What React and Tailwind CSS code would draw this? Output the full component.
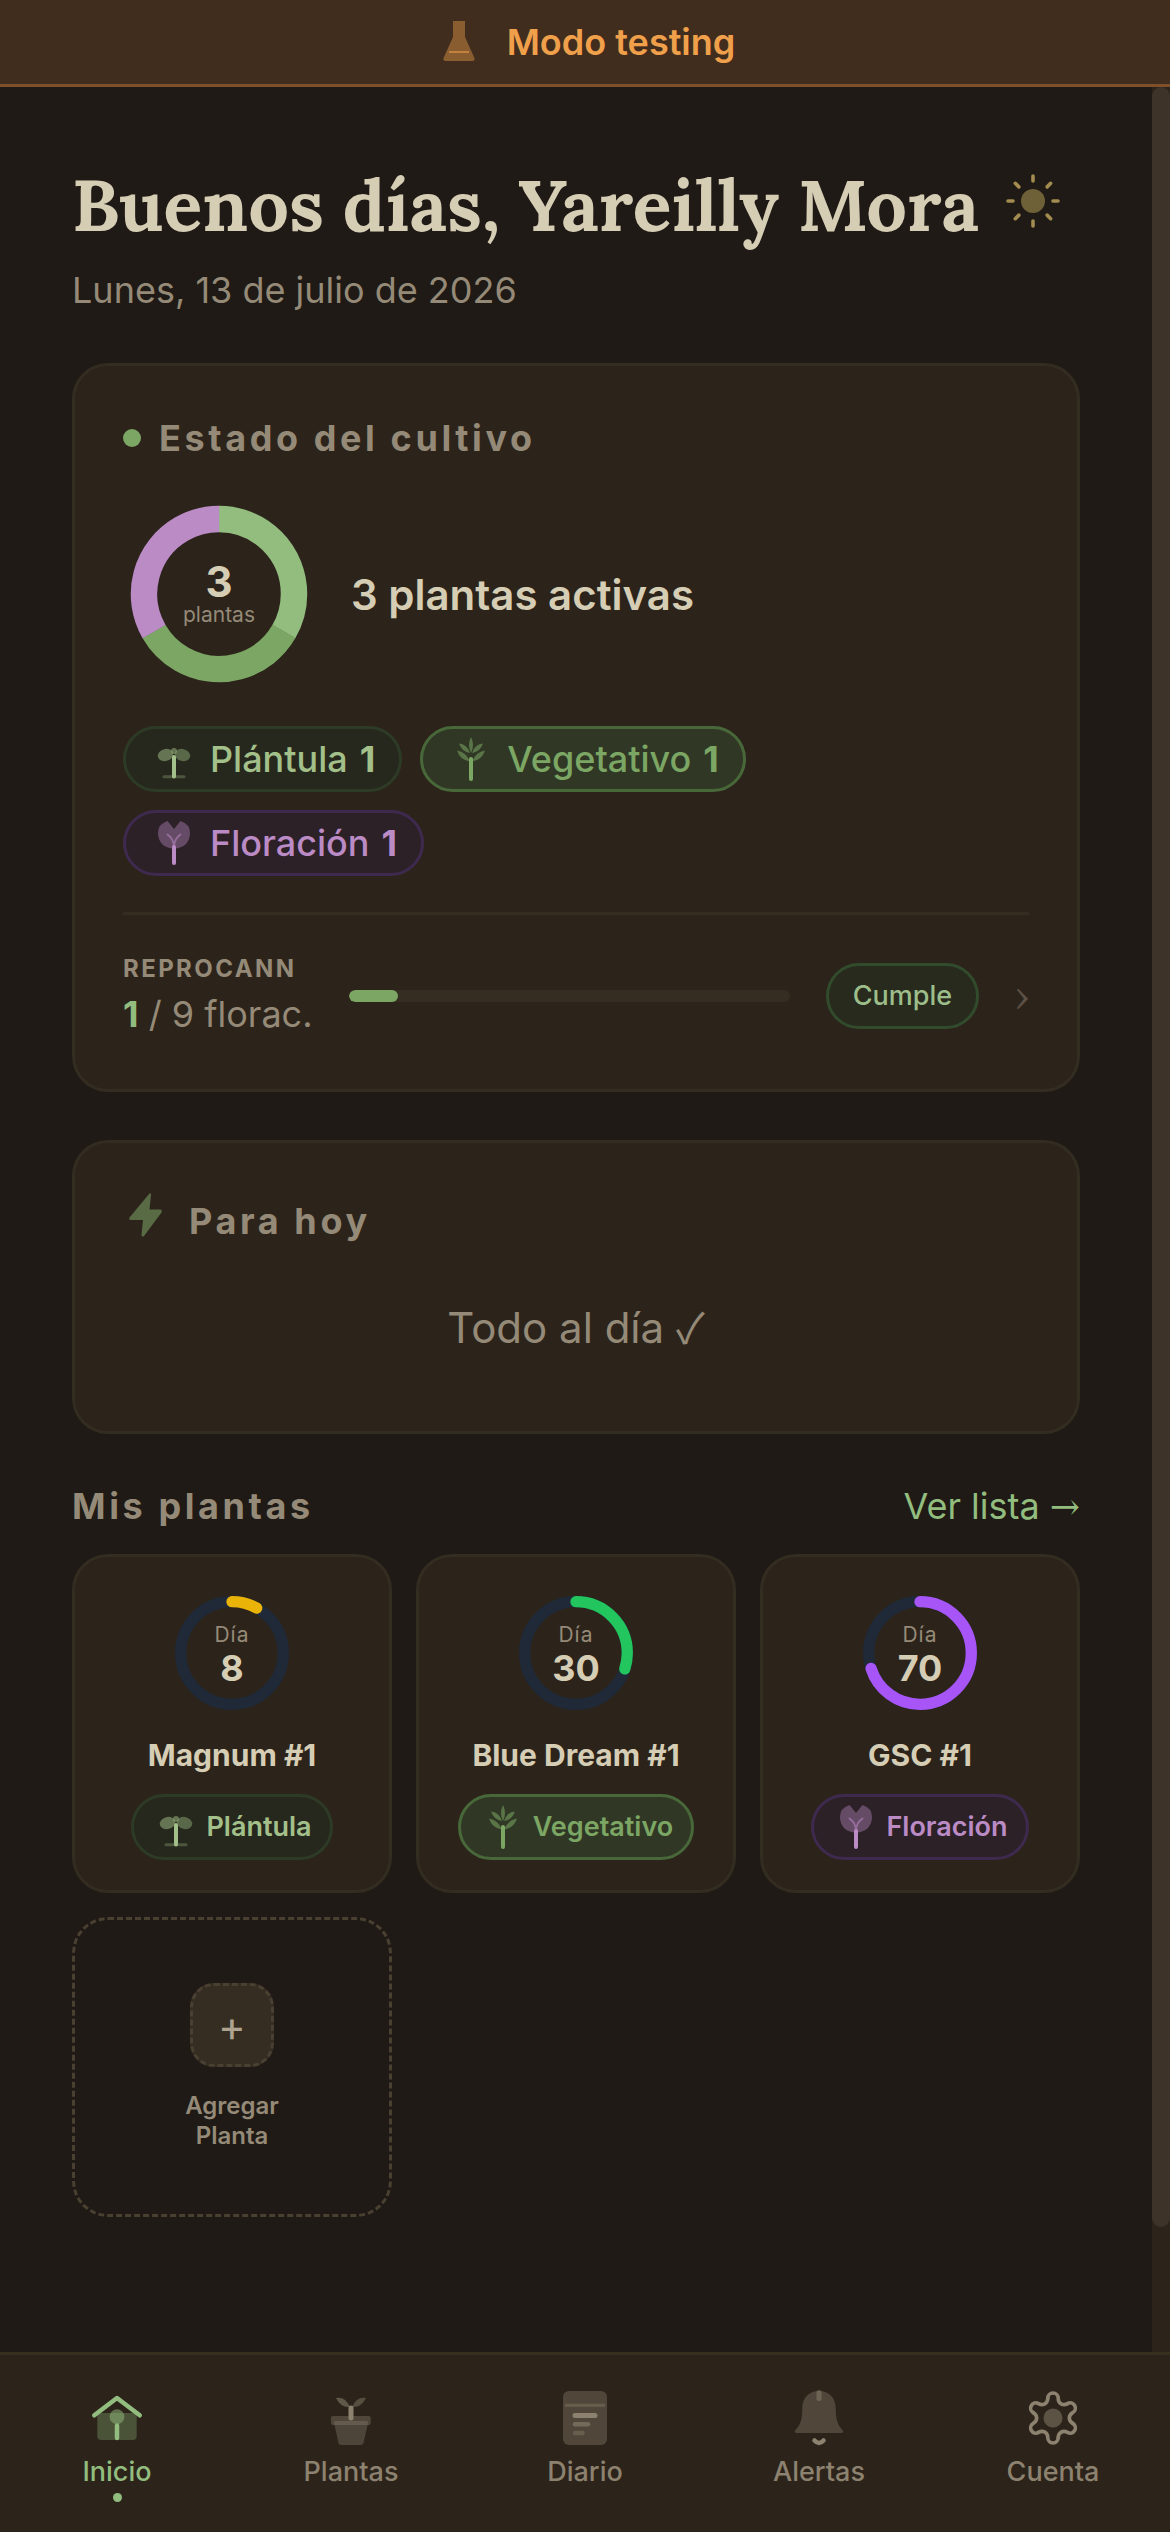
import React, { useState } from 'react';
import clsx from 'clsx';

const STAGES = {
  plantula: {
    label: 'Plántula',
    chip: 'bg-[#27281d] border-[#2d3b26] text-[#a3c08a]',
    icon: SeedlingIcon,
  },
  vegetativo: {
    label: 'Vegetativo',
    chip: 'bg-[#303825] border-[#48683a] text-[#7ca664]',
    icon: LeafIcon,
  },
  floracion: {
    label: 'Floración',
    chip: 'bg-[#2d2128] border-[#3f2a4f] text-[#bb8bc6]',
    icon: FlowerIcon,
  },
};

const STAGE_COUNTS = [
  { stage: 'plantula', count: 1 },
  { stage: 'vegetativo', count: 1 },
  { stage: 'floracion', count: 1 },
];

const PLANTS = [
  { name: 'Magnum #1', day: 8, color: '#eab308', stage: 'plantula' },
  { name: 'Blue Dream #1', day: 30, color: '#22c55e', stage: 'vegetativo' },
  { name: 'GSC #1', day: 70, color: '#a855f7', stage: 'floracion' },
];

const TABS = [
  { id: 'inicio', label: 'Inicio', icon: HomeIcon },
  { id: 'plantas', label: 'Plantas', icon: PotIcon },
  { id: 'diario', label: 'Diario', icon: JournalIcon },
  { id: 'alertas', label: 'Alertas', icon: BellIcon },
  { id: 'cuenta', label: 'Cuenta', icon: GearIcon },
];

/* Icons */

function FlaskIcon() {
  return (
    <svg viewBox="0 0 48 48" className="size-12" fill="none" aria-hidden="true">
      <path
        d="M18 4H30V20L39 40Q41 44 37 44H11Q7 44 9 40L18 20Z"
        transform="translate(0 -1)"
        fill="#f0a04b"
        fillOpacity="0.42"
      />
      <path d="M14 34H34" stroke="#f0a04b" strokeOpacity="0.55" strokeWidth="2" />
    </svg>
  );
}

function SunIcon() {
  return (
    <svg viewBox="0 0 60 60" className="size-15" fill="none" aria-hidden="true">
      <circle cx="30" cy="30" r="12" fill="#6f6137" />
      {[0, 45, 90, 135, 180, 225, 270, 315].map((angle) => (
        <path
          key={angle}
          d="M30 10V5"
          transform={`rotate(${angle} 30 30)`}
          stroke="#a38c4f"
          strokeWidth="3.6"
          strokeLinecap="round"
        />
      ))}
    </svg>
  );
}

function BoltIcon() {
  return (
    <svg viewBox="0 0 48 48" className="size-12" aria-hidden="true">
      <path
        d="M26.5 2.5L6.5 26.5Q5.5 29 8 29H20L18.5 44Q19 47 21 45L38.5 21.5Q39.5 18.5 37 18.5H26.5L28 4Q28 1.5 26.5 2.5Z"
        fill="#596b45"
      />
    </svg>
  );
}

function SeedlingIcon() {
  return (
    <svg viewBox="0 0 48 48" className="size-12 shrink-0" aria-hidden="true">
      <g fill="currentColor">
        <ellipse cx="15.5" cy="20" rx="7.8" ry="6" transform="rotate(-14 15.5 20)" opacity="0.5" />
        <ellipse cx="32.5" cy="20" rx="7.8" ry="6" transform="rotate(14 32.5 20)" opacity="0.42" />
        <circle cx="24" cy="16" r="3" opacity="0.5" />
      </g>
      <g stroke="currentColor" strokeLinecap="round">
        <path d="M14 41.7H34" strokeWidth="3" opacity="0.3" />
        <path d="M24 22V41.5" strokeWidth="4" />
      </g>
    </svg>
  );
}

function LeafIcon() {
  return (
    <svg viewBox="0 0 48 48" className="size-12 shrink-0" aria-hidden="true">
      <g fill="currentColor" opacity="0.55">
        <path d="M24 2Q28 10 24 18Q20 10 24 2Z" />
        <path d="M12 8.5Q20 9 23 18Q15 17 12 8.5Z" />
        <path d="M36 8.5Q28 9 25 18Q33 17 36 8.5Z" />
        <path d="M10 15.5Q19 17 23 26.5Q13 25 10 15.5Z" />
        <path d="M38 15.5Q29 17 25 26.5Q35 25 38 15.5Z" />
      </g>
      <path d="M24 24V44" stroke="currentColor" strokeWidth="4" strokeLinecap="round" />
    </svg>
  );
}

function FlowerIcon() {
  return (
    <svg viewBox="0 0 48 48" className="size-12 shrink-0" fill="none" aria-hidden="true">
      <path
        d="M24 10L17.5 2Q8 5 8 14C8 23 14 29.5 24 29.5S40 23 40 14Q40 5 30.5 2Z"
        fill="currentColor"
        opacity="0.4"
      />
      <g stroke="currentColor" strokeLinecap="round">
        <path d="M17.5 15.5Q23 19 24 27Q25 19 30.5 15.5" strokeWidth="2" opacity="0.55" />
        <path d="M24 28V44" strokeWidth="4" />
      </g>
    </svg>
  );
}

function HomeIcon() {
  return (
    <svg viewBox="0 0 60 60" className="size-15" fill="none" aria-hidden="true">
      <rect x="10.3" y="25" width="39.4" height="27" rx="4" fill="currentColor" opacity="0.3" />
      <circle cx="30" cy="28.7" r="7.4" fill="currentColor" opacity="0.5" />
      <g stroke="currentColor" strokeWidth="4.5" strokeLinecap="round" strokeLinejoin="round">
        <path d="M7.3 27.3L30 10L52.7 27.3" />
        <path d="M30 37.5V50" />
      </g>
    </svg>
  );
}

function PotIcon() {
  return (
    <svg viewBox="0 0 60 60" className="size-15" fill="none" aria-hidden="true">
      <path d="M13 35Q12.5 33 15 33H45Q47.5 33 47 35L42.5 55Q42 57 40 57H20Q18 57 17.5 55Z" fill="#4d443a" />
      <rect x="10" y="28" width="39.7" height="9" rx="2" fill="currentColor" opacity="0.38" />
      <path d="M29 19Q20 20 15 10Q24 8 29 19Z" fill="currentColor" opacity="0.55" />
      <path d="M31 19Q40 20 45 10Q36 8 31 19Z" fill="currentColor" opacity="0.45" />
      <path d="M30 20V30" stroke="currentColor" strokeWidth="5" strokeLinecap="round" />
    </svg>
  );
}

function JournalIcon() {
  return (
    <svg viewBox="0 0 60 60" className="size-15" fill="none" aria-hidden="true">
      <rect x="8" y="3" width="44" height="54" rx="6" fill="currentColor" opacity="0.38" />
      <g stroke="currentColor">
        <path d="M10 17.3H50" strokeWidth="3" opacity="0.4" />
        <path d="M20 27.5H40" strokeWidth="5" strokeLinecap="round" />
        <path d="M20 36.3H33" strokeWidth="4.5" strokeLinecap="round" opacity="0.6" />
        <path d="M20 45H27.5" strokeWidth="4.5" strokeLinecap="round" opacity="0.4" />
      </g>
    </svg>
  );
}

function BellIcon() {
  return (
    <svg viewBox="0 0 60 60" className="size-15" fill="none" aria-hidden="true">
      <path
        d="M30 3C20 3 13.3 10 13.3 20C13.3 31 11.5 37 6.5 42Q4.5 45 8 45H52Q55.5 45 53.5 42C48.5 37 46.7 31 46.7 20C46.7 10 40 3 30 3Z"
        fill="currentColor"
        opacity="0.38"
      />
      <path d="M30 4.5V10.5" stroke="currentColor" strokeWidth="5" strokeLinecap="round" opacity="0.5" />
      <path d="M25.5 52.5Q30 57.5 34.5 52.5" stroke="currentColor" strokeWidth="4.5" strokeLinecap="round" />
    </svg>
  );
}

function GearIcon() {
  return (
    <svg viewBox="0 0 60 60" className="size-15" fill="none" aria-hidden="true">
      {[0, 60, 120, 180, 240, 300].map((angle) => (
        <path
          key={angle}
          d="M-5.2 -19.8A5.2 5.2 0 0 1 5.2 -19.8C5.2 -14.5 9.8 -11.9 14.5 -14.4"
          transform={`translate(30 30) rotate(${angle})`}
          stroke="currentColor"
          strokeWidth="3.6"
          strokeLinecap="round"
        />
      ))}
      <circle cx="30" cy="30" r="9.5" fill="currentColor" opacity="0.5" />
    </svg>
  );
}

/* Charts */

function StageDonut() {
  const r = 75;
  const third = (2 * Math.PI * r) / 3;
  const colors = ['#92bd7f', '#7ca664', '#bb8bc6'];

  return (
    <div className="grid size-48 shrink-0 place-items-center">
      <svg viewBox="0 0 192 192" className="col-start-1 row-start-1 size-48" fill="none" aria-hidden="true">
        {colors.map((color, i) => (
          <circle
            key={color}
            cx="96"
            cy="96"
            r={r}
            stroke={color}
            strokeWidth="26.5"
            strokeDasharray={`${third} ${third * 2}`}
            transform={`rotate(${i * 120 - 90} 96 96)`}
          />
        ))}
      </svg>
      <div className="col-start-1 row-start-1 flex flex-col items-center">
        <span className="text-[42px] leading-[42px] font-bold text-[#d6cdb5]">3</span>
        <span className="text-[21px] leading-6 text-[#958a77]">plantas</span>
      </div>
    </div>
  );
}

function DayRing({ day, color }) {
  const r = 51.3;
  const length = 2 * Math.PI * r;

  return (
    <div className="grid size-30 place-items-center">
      <svg viewBox="0 0 120 120" className="col-start-1 row-start-1 size-30" fill="none" aria-hidden="true">
        <circle cx="60" cy="60" r={r} stroke="#1f2937" strokeWidth="11.3" />
        <circle
          cx="60"
          cy="60"
          r={r}
          stroke={color}
          strokeWidth="11.3"
          strokeLinecap="round"
          strokeDasharray={`${(length * day) / 100} ${length}`}
          transform="rotate(-90 60 60)"
        />
      </svg>
      <div className="col-start-1 row-start-1 flex flex-col items-center">
        <span className="text-[21px] leading-[30px] tracking-[1px] text-[#958a77]">Día</span>
        <span className="text-4xl leading-9 font-bold text-[#d6cdb5]">{day}</span>
      </div>
    </div>
  );
}

/* Cards */

function StageChip({ stage, count }) {
  const { label, chip, icon: Icon } = STAGES[stage];
  return (
    <span className={clsx('flex h-[66px] items-center gap-3 rounded-full border-3 px-6 text-4xl font-medium', chip)}>
      <Icon />
      <span>{label}</span>
      <strong className="font-bold">{count}</strong>
    </span>
  );
}

function StatusCard() {
  return (
    <section className="rounded-[36px] border-3 border-[#332c20] bg-[#2c241b] p-12">
      <div className="flex items-center gap-[18px]">
        <span className="size-[18px] rounded-full bg-[#7ca664]" />
        <h2 className="text-4xl leading-12 font-bold tracking-widest text-[#958a77]">Estado del cultivo</h2>
      </div>

      <div className="mt-9 flex items-center gap-9">
        <StageDonut />
        <p className="text-[42px] leading-[63px] font-semibold text-[#d6cdb5]">3 plantas activas</p>
      </div>

      <div className="mt-9 flex flex-wrap gap-[18px]">
        {STAGE_COUNTS.map((item) => (
          <StageChip key={item.stage} {...item} />
        ))}
      </div>

      <a href="#reprocann" className="mt-9 flex items-center gap-9 border-t-3 border-[#352d22] pt-9">
        <div className="text-[#958a77]">
          <div className="text-2xl leading-9 font-bold tracking-widest">REPROCANN</div>
          <div className="text-4xl leading-[54px]">
            <strong className="font-bold text-[#92bd7f]">1</strong> / 9 florac.
          </div>
        </div>
        <div className="h-3 flex-1 overflow-hidden rounded-full bg-[#352d22]">
          <div className="h-full rounded-full bg-[#7ca664]" style={{ width: `${(1 / 9) * 100}%` }} />
        </div>
        <span className="flex h-[66px] items-center rounded-full border-3 border-[#314b2c] bg-[#272a1d] px-6 text-[27px] font-medium text-[#9dbe8a]">
          Cumple
        </span>
        <span className="font-['Lora',serif] text-4xl text-[#5c5145]">›</span>
      </a>
    </section>
  );
}

function TodayCard() {
  return (
    <section className="rounded-[36px] border-3 border-[#332c20] bg-[#2c241b] p-12">
      <div className="flex items-end gap-[18px]">
        <div className="pb-1.5">
          <BoltIcon />
        </div>
        <h2 className="text-4xl leading-12 font-bold tracking-widest text-[#958a77]">Para hoy</h2>
      </div>
      <p className="pt-[51px] pb-6 text-center text-[42px] leading-[63px] text-[#958a77]">
        Todo al día <span className="font-['Noto_Sans_CJK_SC',sans-serif] leading-none">✓</span>
      </p>
    </section>
  );
}

function PlantCard({ name, day, color, stage }) {
  const { label, chip, icon: Icon } = STAGES[stage];
  return (
    <article className="flex flex-col items-center rounded-[36px] border-3 border-[#332c20] bg-[#2c241b] pt-9 pb-[30px]">
      <DayRing day={day} color={color} />
      <h3 className="mt-6 text-[30px] leading-9 font-bold whitespace-nowrap text-[#d6cdb5]">{name}</h3>
      <span
        className={clsx(
          'mt-[21px] flex h-[66px] items-center gap-1.5 rounded-full border-3 px-[18px] text-[27px] font-semibold',
          chip
        )}
      >
        <Icon />
        {label}
      </span>
    </article>
  );
}

function AddPlantCard() {
  return (
    <button
      type="button"
      className="flex h-[300px] flex-col items-center justify-center gap-6 rounded-[36px] border-3 border-dashed border-[#4a4032]"
    >
      <span className="flex size-[84px] items-center justify-center rounded-3xl border-3 border-dashed border-[#4a4032] bg-[#352d22] text-[42px] text-[#aea38e]">
        +
      </span>
      <span className="w-24 text-2xl leading-[30px] font-semibold text-[#958a77]">Agregar Planta</span>
    </button>
  );
}

function BottomNav({ active, onChange }) {
  return (
    <nav className="grid h-[180px] grid-cols-5 border-t-3 border-[#38301f] bg-[#2c241b] pt-[33px]">
      {TABS.map(({ id, label, icon: Icon }) => (
        <button
          key={id}
          type="button"
          onClick={() => onChange(id)}
          className={clsx(
            'flex flex-col items-center justify-start text-[27px] font-medium',
            id === active ? 'text-[#92bd7f]' : 'text-[#8c826f]'
          )}
        >
          <Icon />
          <span className="mt-1 leading-10">{label}</span>
          {id === active && <span className="mt-px size-[9px] rounded-full bg-[#92bd7f]" />}
        </button>
      ))}
    </nav>
  );
}

function App() {
  const [tab, setTab] = useState('inicio');

  return (
    <div className="flex min-h-screen flex-col bg-[#1f1a15] font-['Inter',sans-serif]">
      {/* Testing banner */}
      <div className="flex h-[87px] items-center justify-center gap-6 border-b-3 border-[#7f4f2a] bg-[#412d1e] text-4xl font-semibold text-[#f0a04b]">
        <FlaskIcon />
        Modo testing
      </div>

      <div className="flex flex-1">
        <main className="flex-1 p-[72px]">
          <header>
            <h1 className="flex items-center gap-6 font-['Lora','Liberation_Serif',serif] text-[72px] leading-[92px] font-bold whitespace-nowrap text-[#d6cdb5]">
              Buenos días, Yareilly Mora
              <span className="pb-2">
                <SunIcon />
              </span>
            </h1>
            <p className="mt-3 text-4xl leading-[54px] text-[#958a77]">Lunes, 13 de julio de 2026</p>
          </header>

          <div className="mt-[46px] flex flex-col gap-12">
            <StatusCard />
            <TodayCard />

            <section>
              <div className="flex items-center justify-between">
                <h2 className="text-4xl leading-12 font-bold tracking-widest text-[#958a77]">Mis plantas</h2>
                <a href="#plantas" className="text-4xl leading-12 text-[#92bd7f]">
                  Ver lista <span className="font-['DejaVu_Serif',serif] leading-none">→</span>
                </a>
              </div>
              <div className="mt-6 grid grid-cols-3 gap-6">
                {PLANTS.map((plant) => (
                  <PlantCard key={plant.name} {...plant} />
                ))}
                <AddPlantCard />
              </div>
            </section>
          </div>
        </main>

        {/* Scroll track */}
        <div className="w-[18px] bg-[#2c241b]" aria-hidden="true">
          <div className="h-[94.5%] rounded-full bg-[#3d3329]" />
        </div>
      </div>

      <BottomNav active={tab} onChange={setTab} />
    </div>
  );
}

export default App;
